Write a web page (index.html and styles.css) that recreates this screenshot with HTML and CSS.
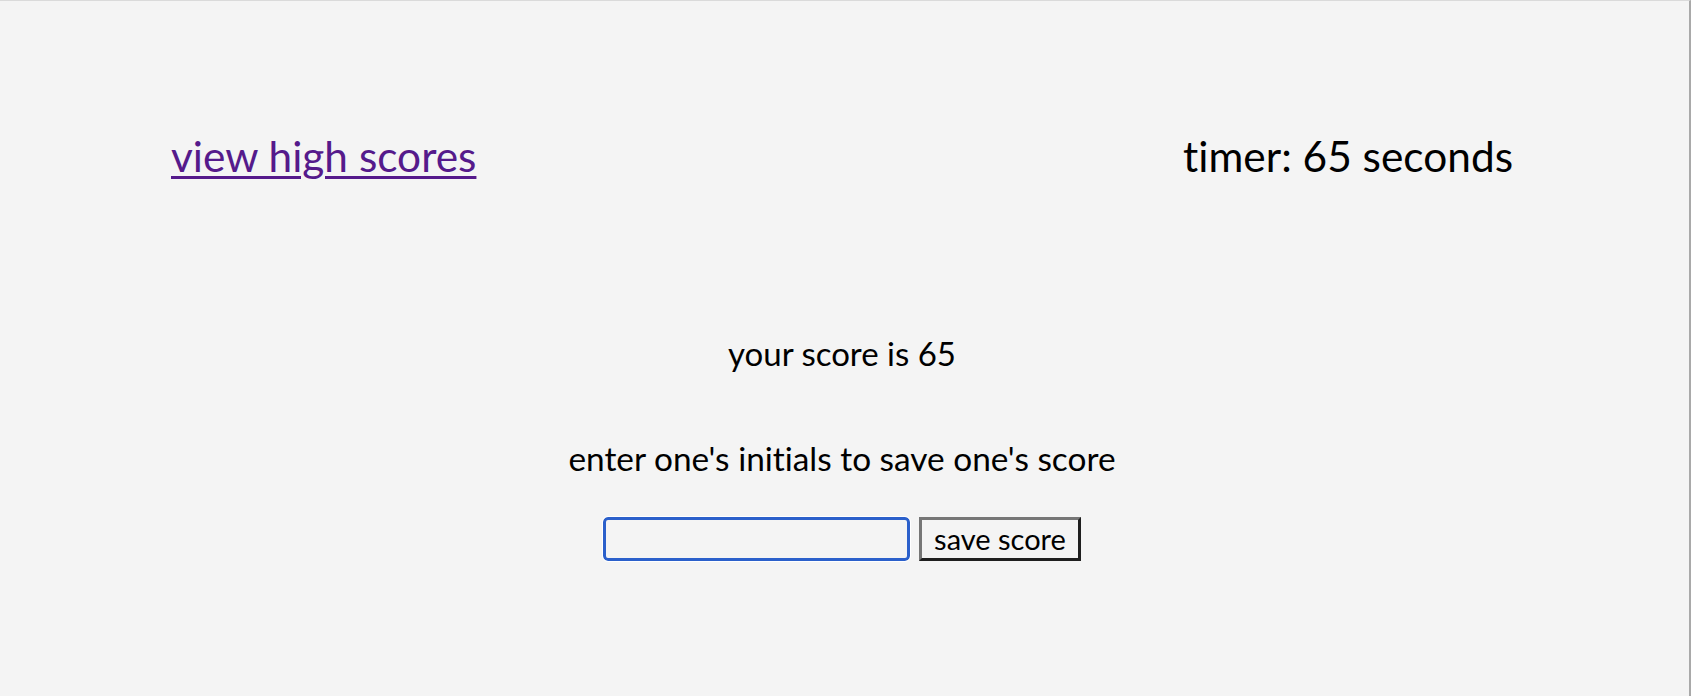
FILE: index.html
```html
<!DOCTYPE html>
<html lang="en">
<head>
<meta charset="utf-8">
<title>Quiz - score</title>
<link rel="stylesheet" href="styles.css">
</head>
<body>
<div class="page">
  <header class="topbar">
    <a class="hs-link" href="#">view high scores</a>
    <div class="timer">timer: 65 seconds</div>
  </header>
  <main class="result">
    <p class="score">your score is 65</p>
    <p class="prompt">enter one's initials to save one's score</p>
    <form class="save-form">
      <input class="initials" type="text" aria-label="initials">
      <button class="save-btn" type="button">save score</button>
    </form>
  </main>
</div>
</body>
</html>
```

FILE: styles.css
```css
html, body {
  margin: 0;
  padding: 0;
}

body {
  background: #f4f4f4;
  font-family: Lato, "Open Sans", "Liberation Sans", sans-serif;
  font-variant-ligatures: none;
  color: #000;
}

.page {
  min-height: 100vh;
  box-sizing: border-box;
  border-top: 1px solid #dadada;
  border-right: 2px solid #a9a9a9;
}

.topbar {
  display: flex;
  justify-content: space-between;
  align-items: flex-start;
  padding: 130px 176px 0 171px;
  font-size: 42.4px;
  line-height: 50px;
}

.hs-link {
  color: #551a8b;
  text-decoration: underline;
  text-decoration-thickness: 3px;
  text-underline-offset: 4px;
}

.timer {
  color: #000;
}

.result {
  display: flex;
  flex-direction: column;
  align-items: center;
  padding: 152px 5px 0 0;
  font-size: 33px;
  line-height: 40px;
}

.score {
  margin: 0;
}

.prompt {
  margin: 65px 0 0;
  font-size: 33.4px;
}

.save-form {
  display: flex;
  gap: 9px;
  margin-top: 39px;
}

.initials {
  box-sizing: border-box;
  width: 307px;
  height: 44px;
  margin: 0;
  padding: 0 6px;
  background: #f4f4f4;
  border: 3px solid #2b60cb;
  border-radius: 5px;
  outline: 1px solid #ffffff;
  font: inherit;
  font-size: 24px;
}

.save-btn {
  box-sizing: border-box;
  width: 162px;
  height: 44px;
  margin: 0;
  padding: 0 0 2px;
  background: #f4f4f4;
  border-style: solid;
  border-width: 3px;
  border-color: #767676 #1f1f1f #1f1f1f #767676;
  font-family: inherit;
  font-size: 29px;
  line-height: 1;
  color: #000;
}
```
